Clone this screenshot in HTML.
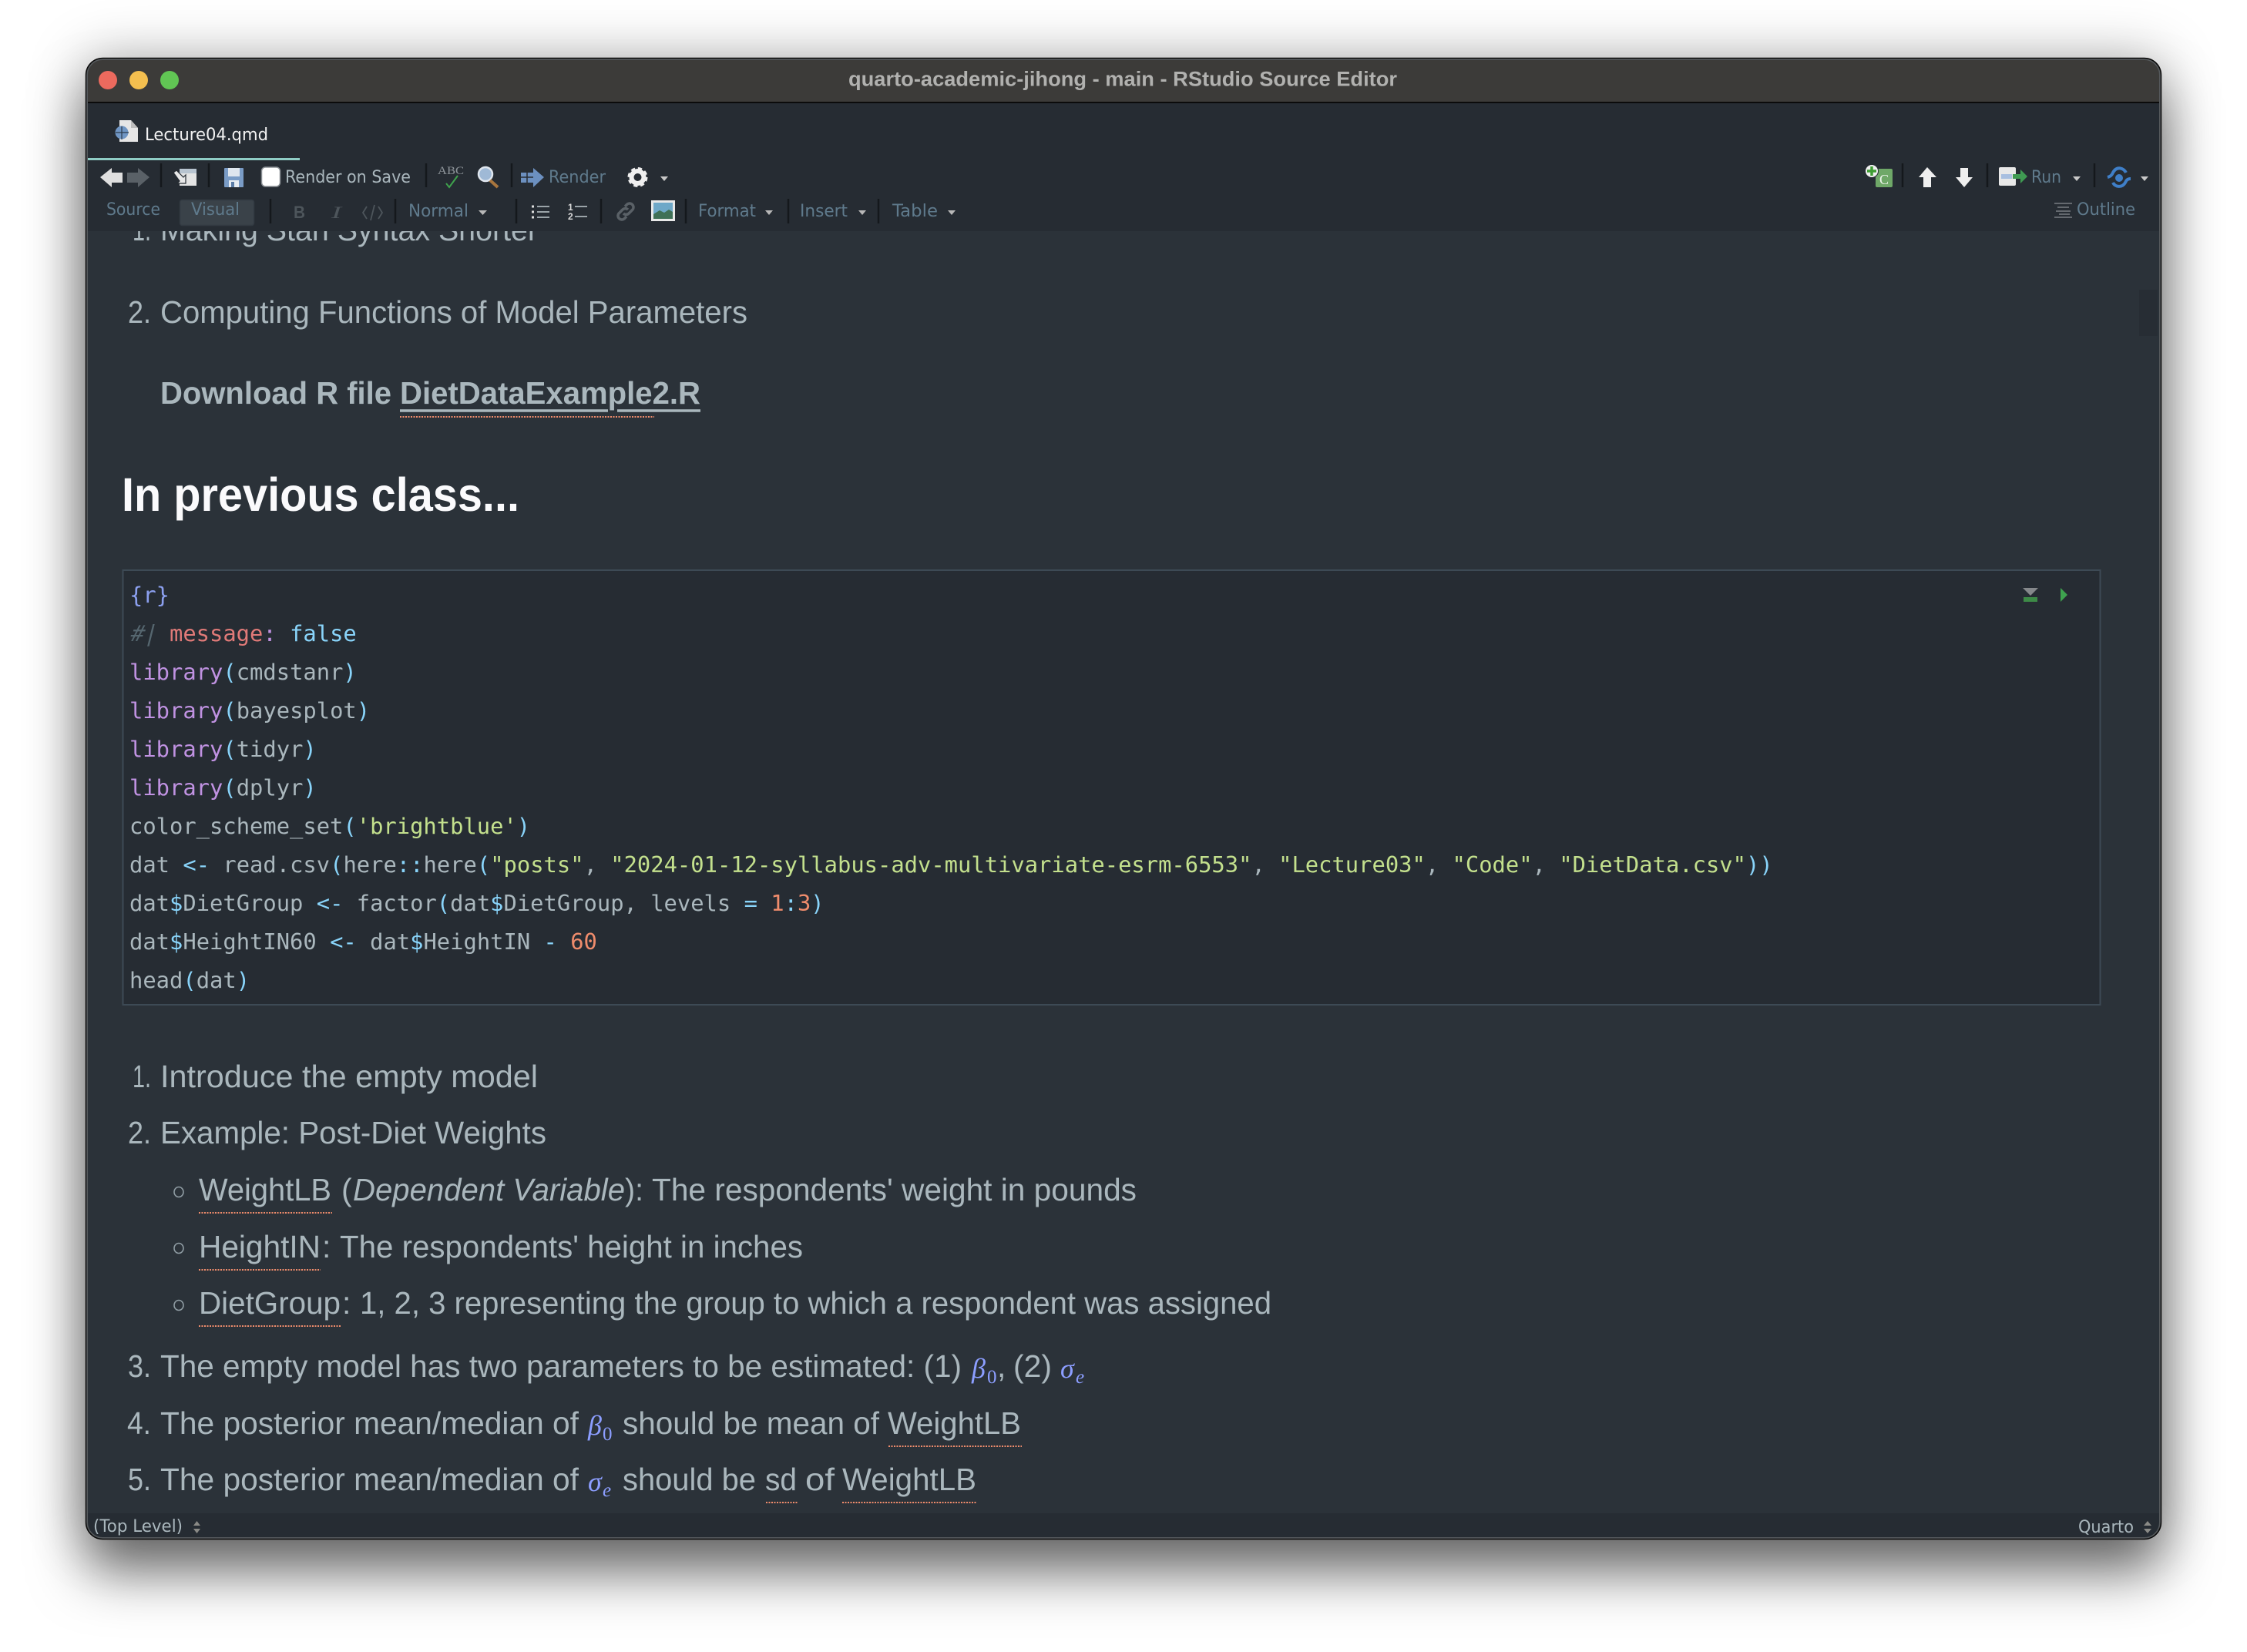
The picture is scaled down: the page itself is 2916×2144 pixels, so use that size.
<!DOCTYPE html>
<html><head><meta charset="utf-8"><title>quarto-academic-jihong - main - RStudio Source Editor</title>
<style>
html,body{margin:0;padding:0;background:#fff;width:2916px;height:2144px;overflow:hidden}
#win{position:absolute;left:111px;top:75px;width:2694px;height:1923px;border-radius:22px;background:#2b3239;box-shadow:0 44px 70px 0 rgba(0,0,0,.52),0 0 70px 4px rgba(0,0,0,.26)}
svg{position:absolute;left:0;top:0}
.b{font-family:"Liberation Sans",sans-serif;font-size:41px;fill:#aab7bd}
.sb{font-family:"Liberation Sans",sans-serif;font-size:41px;font-weight:bold;fill:#aab7bd}
.ui{font-family:"DejaVu Sans",sans-serif;font-size:22.5px}
.d{fill:#5f7a8c}
.c{font-family:"DejaVu Sans Mono",monospace;font-size:28.8px;fill:#aab7bd}
.m{font-family:"Liberation Serif",serif;font-style:italic;font-size:36px;fill:#8c9eff}
.ms{font-family:"Liberation Serif",serif;font-size:25px;fill:#8c9eff}
.mi{font-family:"Liberation Serif",serif;font-style:italic;font-size:25px;fill:#8c9eff}
.p{fill:#89d4fa}.s{fill:#c3e08d}.n{fill:#ef8c6c}.k{fill:#c092e2}
.sep{stroke:#14181c;stroke-width:2.5}
.dot{stroke:#ef8c6c;stroke-width:2;stroke-dasharray:2 1.5;fill:none}
</style></head><body>
<div id="win"></div>
<svg width="2916" height="2144" viewBox="0 0 2916 2144" xmlns="http://www.w3.org/2000/svg" xml:space="preserve">
<defs><clipPath id="w"><rect x="111" y="75" width="2694" height="1923" rx="22"/></clipPath></defs>
<g clip-path="url(#w)">
<!-- editor -->
<rect x="111" y="300" width="2694" height="1664" fill="#2b3239"/>
<text class="b" x="172" y="312" textLength="24" lengthAdjust="spacingAndGlyphs">1.</text>
<text class="b" x="208" y="312" textLength="490" lengthAdjust="spacingAndGlyphs">Making Stan Syntax Shorter</text>
<text class="b" x="166" y="419" textLength="30" lengthAdjust="spacingAndGlyphs">2.</text>
<text class="b" x="208" y="419" textLength="762" lengthAdjust="spacingAndGlyphs">Computing Functions of Model Parameters</text>
<text class="sb" x="208" y="524" textLength="300" lengthAdjust="spacingAndGlyphs">Download R file</text>
<text class="sb" x="519" y="524" textLength="390" lengthAdjust="spacingAndGlyphs">DietDataExample2.R</text>
<path d="M519 533H789M801 533H909" stroke="#aab7bd" stroke-width="3.5" fill="none"/>
<line class="dot" x1="519" x2="849" y1="541" y2="541"/>
<text x="158" y="663" font-family="Liberation Sans" font-weight="bold" font-size="61" fill="#fafafc" textLength="516" lengthAdjust="spacingAndGlyphs">In previous class...</text>
<!-- code block -->
<rect x="159.5" y="740" width="2566" height="564" fill="#262c33" stroke="#3d4a55" stroke-width="2"/>
<text class="c" x="168" y="782" style="fill:#8b9fee">{r}</text>
<text class="c" transform="translate(168,832) skewX(-14)" style="fill:#55666f">#|</text>
<text class="c" x="220" y="832"><tspan style="fill:#e07a78">message</tspan><tspan class="k">:</tspan> <tspan class="p">false</tspan></text>
<text class="c" x="168" y="882"><tspan class="k">library</tspan><tspan class="p">(</tspan>cmdstanr<tspan class="p">)</tspan></text>
<text class="c" x="168" y="932"><tspan class="k">library</tspan><tspan class="p">(</tspan>bayesplot<tspan class="p">)</tspan></text>
<text class="c" x="168" y="982"><tspan class="k">library</tspan><tspan class="p">(</tspan>tidyr<tspan class="p">)</tspan></text>
<text class="c" x="168" y="1032"><tspan class="k">library</tspan><tspan class="p">(</tspan>dplyr<tspan class="p">)</tspan></text>
<text class="c" x="168" y="1082">color_scheme_set<tspan class="p">(</tspan><tspan class="s">'brightblue'</tspan><tspan class="p">)</tspan></text>
<text class="c" x="168" y="1132">dat <tspan class="p">&lt;-</tspan> read.csv<tspan class="p">(</tspan>here<tspan class="p">::</tspan>here<tspan class="p">(</tspan><tspan class="s">"posts"</tspan>, <tspan class="s">"2024-01-12-syllabus-adv-multivariate-esrm-6553"</tspan>, <tspan class="s">"Lecture03"</tspan>, <tspan class="s">"Code"</tspan>, <tspan class="s">"DietData.csv"</tspan><tspan class="p">))</tspan></text>
<text class="c" x="168" y="1182">dat<tspan class="p">$</tspan>DietGroup <tspan class="p">&lt;-</tspan> factor<tspan class="p">(</tspan>dat<tspan class="p">$</tspan>DietGroup, levels <tspan class="p">=</tspan> <tspan class="n">1</tspan><tspan class="p">:</tspan><tspan class="n">3</tspan><tspan class="p">)</tspan></text>
<text class="c" x="168" y="1232">dat<tspan class="p">$</tspan>HeightIN60 <tspan class="p">&lt;-</tspan> dat<tspan class="p">$</tspan>HeightIN <tspan class="p">-</tspan> <tspan class="n">60</tspan></text>
<text class="c" x="168" y="1282">head<tspan class="p">(</tspan>dat<tspan class="p">)</tspan></text>
<polygon points="2625,763 2645,763 2635,773" fill="#85888b"/><rect x="2626" y="775" width="18" height="6" fill="#3d8b47"/>
<polygon points="2674,763 2683,772 2674,781" fill="#3ea34f"/>
<rect x="2776" y="376" width="24" height="60" fill="#272d34"/>
<!-- list -->
<text class="b" x="172" y="1411" textLength="24" lengthAdjust="spacingAndGlyphs">1.</text>
<text class="b" x="208" y="1411" textLength="490" lengthAdjust="spacingAndGlyphs">Introduce the empty model</text>
<text class="b" x="166" y="1484" textLength="30" lengthAdjust="spacingAndGlyphs">2.</text>
<text class="b" x="208" y="1484" textLength="501" lengthAdjust="spacingAndGlyphs">Example: Post-Diet Weights</text>
<ellipse cx="232" cy="1547" rx="6" ry="6.5" fill="none" stroke="#8f9ca3" stroke-width="1.6"/>
<text class="b" x="258" y="1558" textLength="172" lengthAdjust="spacingAndGlyphs">WeightLB</text>
<text class="b" x="443" y="1558">(</text>
<text class="b" x="458" y="1558" font-style="italic" textLength="353" lengthAdjust="spacingAndGlyphs">Dependent Variable</text>
<text class="b" x="811" y="1558" textLength="24" lengthAdjust="spacingAndGlyphs">):</text>
<text class="b" x="846" y="1558" textLength="629" lengthAdjust="spacingAndGlyphs">The respondents' weight in pounds</text>
<line class="dot" x1="258" x2="431" y1="1574" y2="1574"/>
<ellipse cx="232" cy="1620" rx="6" ry="6.5" fill="none" stroke="#8f9ca3" stroke-width="1.6"/>
<text class="b" x="258" y="1632" textLength="158" lengthAdjust="spacingAndGlyphs">HeightIN</text>
<text class="b" x="418" y="1632">:</text>
<text class="b" x="441" y="1632" textLength="601" lengthAdjust="spacingAndGlyphs">The respondents' height in inches</text>
<line class="dot" x1="258" x2="416" y1="1648" y2="1648"/>
<ellipse cx="232" cy="1694" rx="6" ry="6.5" fill="none" stroke="#8f9ca3" stroke-width="1.6"/>
<text class="b" x="258" y="1705" textLength="184" lengthAdjust="spacingAndGlyphs">DietGroup</text>
<text class="b" x="444" y="1705">:</text>
<text class="b" x="467" y="1705" textLength="1183" lengthAdjust="spacingAndGlyphs">1, 2, 3 representing the group to which a respondent was assigned</text>
<line class="dot" x1="258" x2="442" y1="1721" y2="1721"/>
<text class="b" x="166" y="1787" textLength="30" lengthAdjust="spacingAndGlyphs">3.</text>
<text class="b" x="208" y="1787" textLength="1040" lengthAdjust="spacingAndGlyphs">The empty model has two parameters to be estimated: (1)</text>
<text class="m" x="1261" y="1788">β</text><text class="ms" x="1281" y="1795">0</text>
<text class="b" x="1294" y="1787">,</text>
<text class="b" x="1315" y="1787" textLength="50" lengthAdjust="spacingAndGlyphs">(2)</text>
<text class="m" x="1376" y="1788">σ</text><text class="mi" x="1396" y="1795">e</text>
<text class="b" x="165" y="1861" textLength="31" lengthAdjust="spacingAndGlyphs">4.</text>
<text class="b" x="208" y="1861" textLength="543" lengthAdjust="spacingAndGlyphs">The posterior mean/median of</text>
<text class="m" x="763" y="1862">β</text><text class="ms" x="782" y="1869">0</text>
<text class="b" x="808" y="1861" textLength="333" lengthAdjust="spacingAndGlyphs">should be mean of</text>
<text class="b" x="1152" y="1861" textLength="173" lengthAdjust="spacingAndGlyphs">WeightLB</text>
<line class="dot" x1="1153" x2="1326" y1="1877" y2="1877"/>
<text class="b" x="166" y="1934" textLength="30" lengthAdjust="spacingAndGlyphs">5.</text>
<text class="b" x="208" y="1934" textLength="543" lengthAdjust="spacingAndGlyphs">The posterior mean/median of</text>
<text class="m" x="763" y="1935">σ</text><text class="mi" x="782" y="1942">e</text>
<text class="b" x="808" y="1934" textLength="173" lengthAdjust="spacingAndGlyphs">should be</text>
<text class="b" x="993" y="1934" textLength="41" lengthAdjust="spacingAndGlyphs">sd</text>
<text class="b" x="1045" y="1934" textLength="38" lengthAdjust="spacingAndGlyphs">of</text>
<text class="b" x="1093" y="1934" textLength="174" lengthAdjust="spacingAndGlyphs">WeightLB</text>
<line class="dot" x1="994" x2="1035" y1="1950" y2="1950"/>
<line class="dot" x1="1093" x2="1267" y1="1950" y2="1950"/>
<!-- status -->
<rect x="111" y="1964" width="2694" height="34" fill="#262c33"/>
<text class="ui" x="121" y="1988" style="fill:#aab7bd" textLength="116" lengthAdjust="spacingAndGlyphs">(Top Level)</text>
<path d="M251 1980l4.500-6 4.500 6zM251 1984l4.500 6 4.500-6z" fill="#8a8a86"/>
<text class="ui" x="2697" y="1989" style="fill:#aab7bd" textLength="72" lengthAdjust="spacingAndGlyphs">Quarto</text>
<path d="M2782 1980l5-6 5 6zM2782 1984l5 6 5-6z" fill="#8a8a86"/>
<!-- title + toolbar -->
<rect x="111" y="75" width="2694" height="57" fill="#3c3b39"/>
<rect x="111" y="132" width="2694" height="2" fill="#0b0b0b"/>
<rect x="111" y="134" width="2694" height="166" fill="#262c33"/>
<circle cx="140" cy="104" r="12" fill="#ec6a5e"/><circle cx="180" cy="104" r="12" fill="#f4bf4f"/><circle cx="220" cy="104" r="12" fill="#61c554"/>
<text x="1101" y="111.500" font-family="Liberation Sans" font-weight="bold" font-size="27" fill="#b1b1af" textLength="712" lengthAdjust="spacingAndGlyphs">quarto-academic-jihong - main - RStudio Source Editor</text>
<!-- tab -->
<path d="M155 156h15l9 10v18h-24z" fill="#e6e6e6"/><path d="M170 156v10h9z" fill="#bdbdbd"/>
<circle cx="158" cy="172" r="8.500" fill="#7096c4"/><path d="M150 172h17M158 164v17" stroke="#2a3a4a" stroke-width="1.200"/>
<text class="ui" x="188" y="182" style="fill:#f2f2f2" textLength="160" lengthAdjust="spacingAndGlyphs">Lecture04.qmd</text>
<rect x="111" y="205" width="278" height="3" fill="#8fcdc5"/>
<!-- row 1 -->
<polygon points="130,230 145,218 145,224 159,224 159,237 145,237 145,243" fill="#dfdfdf"/>
<polygon points="194,230 179,218 179,224 165,224 165,237 179,237 179,243" fill="#5a6167"/>
<line class="sep" x1="209" x2="209" y1="212" y2="243"/>
<path d="M233 219h22v22h-22z" fill="#e4e4e4"/><path d="M233 219h22v6h-22z" fill="#b8c4d0"/><path d="M225 224l4-3 9 9 3-3v11h-11l3-3z" fill="#e8e8e8" stroke="#262c33" stroke-width="1.200"/>
<line class="sep" x1="271" x2="271" y1="212" y2="243"/>
<rect x="291" y="218" width="25" height="25" rx="1" fill="#7a9cc6"/><rect x="296" y="218" width="15" height="11" fill="#dfe6ee"/><rect x="297" y="234" width="13" height="9" fill="#e6ecf2"/><rect x="300" y="236" width="4" height="7" fill="#5a7ca6"/>
<rect x="339.500" y="217" width="24" height="25" rx="5" fill="#fff" stroke="#8a8f94" stroke-width="1.500"/>
<text class="ui" x="370" y="237" style="fill:#aab7bd" textLength="163" lengthAdjust="spacingAndGlyphs">Render on Save</text>
<line class="sep" x1="553" x2="553" y1="212" y2="243"/>
<text x="568" y="226" font-family="Liberation Serif" font-size="15" fill="#8e959a" textLength="34" lengthAdjust="spacingAndGlyphs">ABC</text>
<path d="M579 238l4 5 11-15" fill="none" stroke="#3fa34d" stroke-width="2"/>
<circle cx="630" cy="226" r="9" fill="#9fb9d6" stroke="#dfe6ee" stroke-width="2.500"/><path d="M636 234l10 9" stroke="#a8763e" stroke-width="4"/>
<line class="sep" x1="664" x2="664" y1="212" y2="243"/>
<polygon points="676,224 692,224 692,218 706,230 692,243 692,237 676,237" fill="#6c90c0"/><path d="M676 230h16M684 224v13" stroke="#262c33" stroke-width="1.500"/>
<text class="ui d" x="712" y="237" textLength="74" lengthAdjust="spacingAndGlyphs">Render</text>
<circle cx="827.500" cy="230" r="8" fill="none" stroke="#efefef" stroke-width="6"/><circle cx="827.500" cy="230" r="11" fill="none" stroke="#efefef" stroke-width="4" stroke-dasharray="5 3.640"/>
<polygon points="857,229 867,229 862,235" fill="#c8c8c8"/>
<!-- row 2 -->
<text class="ui d" x="138" y="279" textLength="70" lengthAdjust="spacingAndGlyphs">Source</text>
<rect x="233.500" y="259.500" width="96" height="33" rx="3" fill="#3a4249" stroke="#323a42" stroke-width="1.500"/>
<text class="ui d" x="248" y="279" textLength="63" lengthAdjust="spacingAndGlyphs">Visual</text>
<line class="sep" x1="351" x2="351" y1="258" y2="290"/>
<text x="381" y="283" font-family="Liberation Sans" font-weight="bold" font-size="22" fill="#4d555b" textLength="15" lengthAdjust="spacingAndGlyphs">B</text>
<text x="430" y="283" font-family="Liberation Serif" font-style="italic" font-size="22" fill="#4d555b" textLength="13" lengthAdjust="spacingAndGlyphs">I</text>
<path d="M476 268l-5 8 5 8M491 268l5 8-5 8M486 266l-5 20" fill="none" stroke="#4d555b" stroke-width="1.800"/>
<line class="sep" x1="513" x2="513" y1="258" y2="290"/>
<text class="ui d" x="530" y="281" textLength="78" lengthAdjust="spacingAndGlyphs">Normal</text>
<polygon points="621,273 632,273 626.500,279" fill="#b8b8b8"/>
<line class="sep" x1="670" x2="670" y1="258" y2="290"/>
<path d="M697 268h16M697 275h16M697 282h16" stroke="#9aa3a8" stroke-width="2"/><path d="M690 268h3M690 275h3M690 282h3" stroke="#dcdcdc" stroke-width="3"/>
<text x="737" y="273" font-family="Liberation Sans" font-weight="bold" font-size="12" fill="#dcdcdc">1</text><text x="737" y="285" font-family="Liberation Sans" font-weight="bold" font-size="12" fill="#dcdcdc">2</text>
<path d="M746 268h16M746 281h16" stroke="#9aa3a8" stroke-width="2"/>
<line class="sep" x1="780" x2="780" y1="258" y2="290"/>
<path d="M811 268l3-3a5 5 0 0 1 7 7l-5 5a5 5 0 0 1-7 0M813 281l-3 3a5 5 0 0 1-7-7l5-5a5 5 0 0 1 7 0" fill="none" stroke="#5a6167" stroke-width="3.500"/>
<rect x="845" y="260" width="31" height="27" fill="#e8e8e8"/><rect x="848" y="263" width="25" height="21" fill="#6ea8c8"/><path d="M848 278l8-5 6 3 6-4 5 3v9h-25z" fill="#3f7056"/>
<line class="sep" x1="890" x2="890" y1="258" y2="290"/>
<text class="ui d" x="906" y="281" textLength="75" lengthAdjust="spacingAndGlyphs">Format</text>
<polygon points="993,273 1003,273 998,279" fill="#b8b8b8"/>
<line class="sep" x1="1023" x2="1023" y1="258" y2="290"/>
<text class="ui d" x="1038" y="281" textLength="62" lengthAdjust="spacingAndGlyphs">Insert</text>
<polygon points="1114,273 1124,273 1119,279" fill="#b8b8b8"/>
<line class="sep" x1="1140" x2="1140" y1="258" y2="290"/>
<text class="ui d" x="1158" y="281" textLength="59" lengthAdjust="spacingAndGlyphs">Table</text>
<polygon points="1230,273 1240,273 1235,279" fill="#b8b8b8"/>
<!-- right side -->
<rect x="2434" y="219" width="22" height="24" rx="2" fill="#6fa868"/>
<text x="2439" y="239" font-family="Liberation Serif" font-size="18" fill="#eef5ec">C</text>
<circle cx="2429" cy="222" r="8.500" fill="#f0f0f0" stroke="#262c33" stroke-width="1"/><path d="M2423 222h12M2429 216v12" stroke="#3f9e33" stroke-width="3.500"/>
<line class="sep" x1="2469" x2="2469" y1="212" y2="243"/>
<polygon points="2501,217 2513,230 2506,230 2506,243 2496,243 2496,230 2490,230" fill="#efefef"/>
<polygon points="2549,243 2560,230 2554,230 2554,218 2544,218 2544,230 2538,230" fill="#efefef"/>
<line class="sep" x1="2579" x2="2579" y1="212" y2="243"/>
<rect x="2594" y="217" width="22" height="24" rx="2" fill="#e8e8e8"/><rect x="2597" y="226" width="14" height="6" fill="#a8bfe0"/>
<polygon points="2612,226 2622,226 2622,220 2631,229 2622,238 2622,232 2612,232" fill="#3f9a52"/>
<text class="ui d" x="2636" y="237" textLength="39" lengthAdjust="spacingAndGlyphs">Run</text>
<polygon points="2690,229 2700,229 2695,235" fill="#c8c8c8"/>
<line class="sep" x1="2718" x2="2718" y1="212" y2="243"/>
<path d="M2735 230c4-1 6-3 7-6 5-9 14-6 17 0M2765 232c-5 0-6 3-7 5-4 7-13 6-16 0" fill="none" stroke="#3f7fc8" stroke-width="4"/><circle cx="2750" cy="231" r="5" fill="#3f7fc8"/>
<polygon points="2778,229 2788,229 2783,235" fill="#c8c8c8"/>
<path d="M2666 264h23M2670 269h15M2668 274h19M2672 278h14M2666 282h23" stroke="#6d7278" stroke-width="1.800"/>
<text class="ui d" x="2695" y="279" textLength="76" lengthAdjust="spacingAndGlyphs">Outline</text>
</g>
<!-- edge -->
<rect x="113" y="77" width="2690" height="1919" rx="20" fill="none" stroke="#55595c" stroke-width="2"/>
<rect x="111.500" y="75.500" width="2693" height="1922" rx="22" fill="none" stroke="#0a0a0a" stroke-width="1.500"/>
</svg>
</body></html>
